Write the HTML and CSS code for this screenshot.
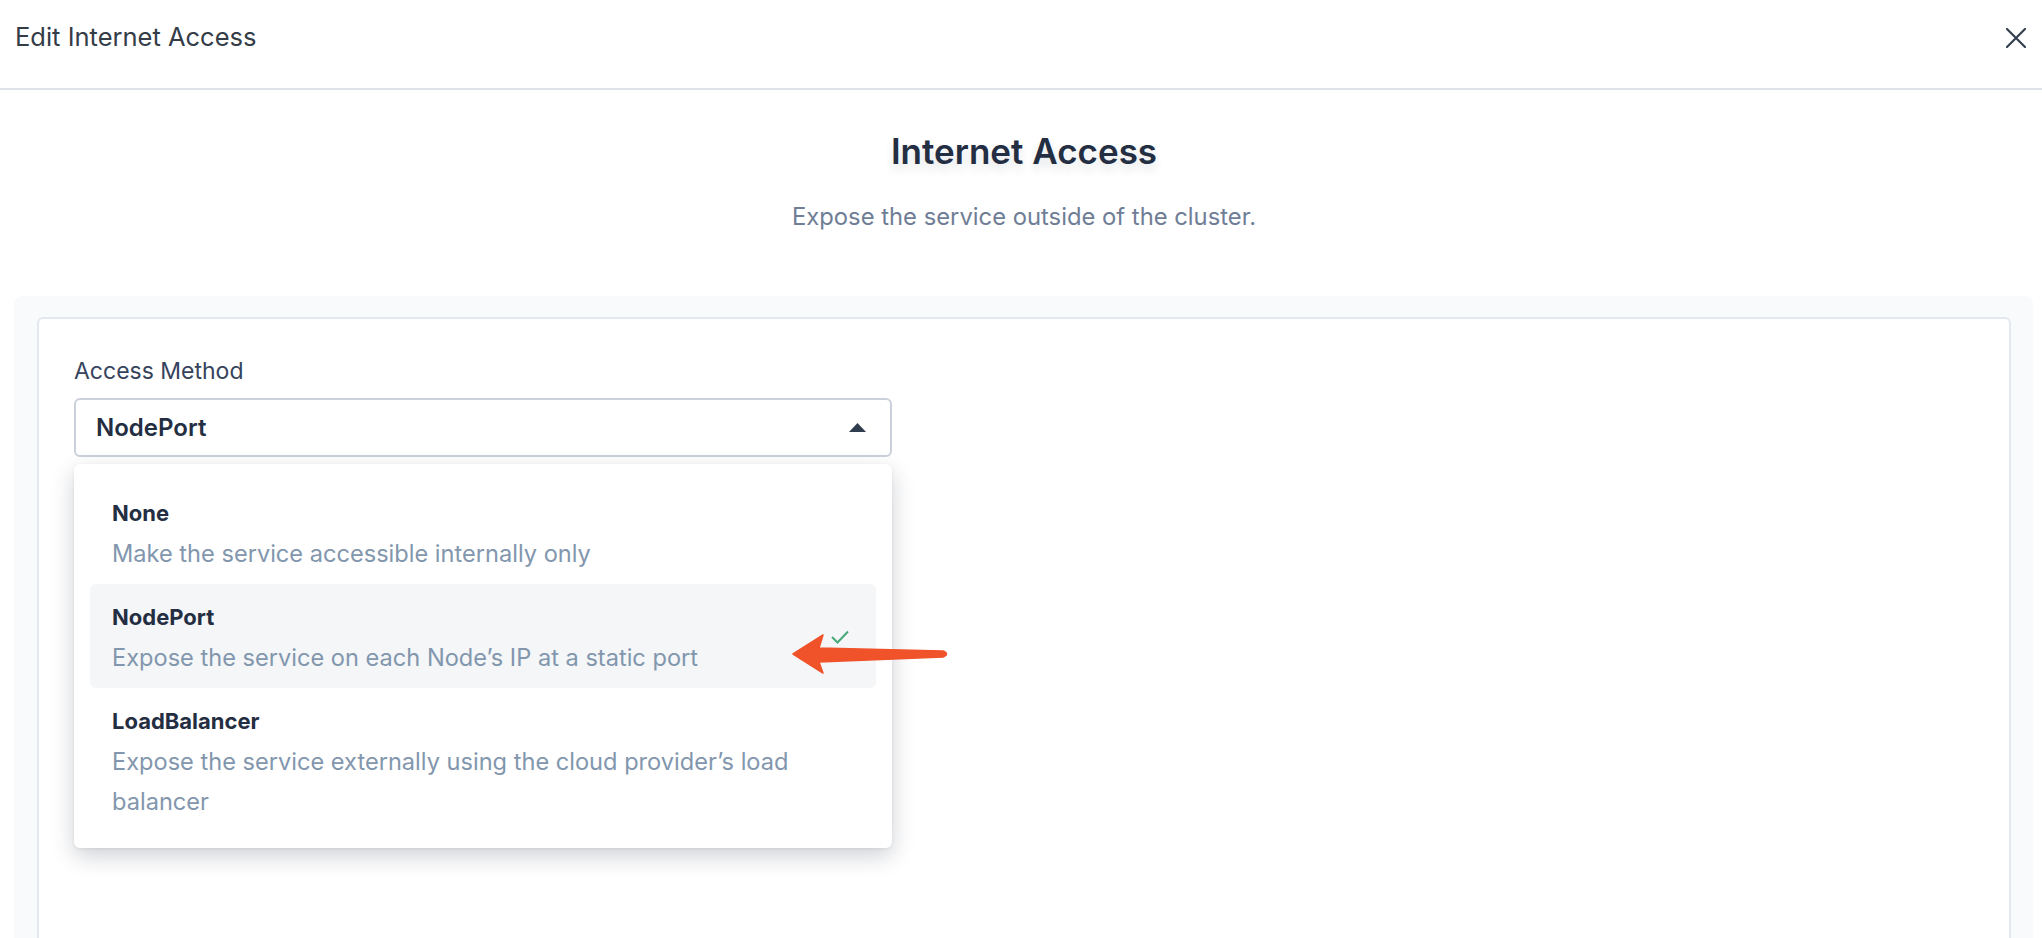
FILE: index.html
```html
<!DOCTYPE html>
<html lang="en">
<head>
<meta charset="utf-8">
<title>Edit Internet Access</title>
<link rel="stylesheet" href="styles.css">
</head>
<body>
<header class="modal-head">
  <h1 class="modal-title">Edit Internet Access</h1>
  <button class="close-btn" aria-label="Close">
    <svg width="20" height="20" viewBox="0 0 20 20"><path d="M1 1 L19 19 M19 1 L1 19" stroke="#34404f" stroke-width="2.2" stroke-linecap="round" fill="none"/></svg>
  </button>
</header>
<main class="modal-body">
  <div class="intro">
    <h2 class="intro-title">Internet Access</h2>
    <p class="intro-sub">Expose the service outside of the cluster.</p>
  </div>
  <section class="panel">
    <div class="card">
      <div class="field-label">Access Method</div>
      <div class="select-wrap">
        <div class="select">
          <span class="select-value">NodePort</span>
          <svg class="caret" width="17" height="9" viewBox="0 0 17 9"><path d="M0 9 L8.5 0 L17 9 Z" fill="#2f3d4f"/></svg>
        </div>
        <ul class="menu">
          <li class="option">
            <div class="option-text">
              <div class="option-title">None</div>
              <div class="option-desc">Make the service accessible internally only</div>
            </div>
          </li>
          <li class="option selected">
            <div class="option-text">
              <div class="option-title">NodePort</div>
              <div class="option-desc">Expose the service on each Node’s IP at a static port</div>
            </div>
            <svg class="check" width="18" height="14" viewBox="0 0 18 14"><path d="M1 7 L6.5 12.5 L17 1.5" stroke="#48a978" stroke-width="2" fill="none"/></svg>
          </li>
          <li class="option">
            <div class="option-text">
              <div class="option-title">LoadBalancer</div>
              <div class="option-desc">Expose the service externally using the cloud provider’s load balancer</div>
            </div>
          </li>
        </ul>
      </div>
    </div>
  </section>
</main>
<svg class="annot-arrow" width="162" height="45" viewBox="0 0 162 45">
  <path d="M3 22 L33 3 L29 16 L153 19 Q160 22 153 25 L29 30 L33 41 Z" fill="#f0522a" stroke="#f0522a" stroke-width="1.5" stroke-linejoin="round"/>
</svg>
</body>
</html>
```
FILE: styles.css
```css
* { box-sizing: border-box; }
html, body { margin: 0; padding: 0; }
body {
  font-family: "Inter", "Liberation Sans", sans-serif;
  background: #ffffff;
  color: #242e42;
  overflow: hidden;
  height: 938px;
  position: relative;
}
.modal-head {
  height: 90px;
  border-bottom: 2px solid #dfe3e8;
  display: flex;
  justify-content: space-between;
  align-items: flex-start;
  padding: 21px 16px 0 15px;
}
.modal-title {
  margin: 0;
  font-size: 25.5px;
  line-height: 32px;
  font-weight: 400;
  color: #343c48;
}
.close-btn {
  border: 0;
  background: transparent;
  padding: 0;
  margin-top: 7px;
  width: 20px;
  height: 20px;
  display: flex;
}
.intro {
  text-align: center;
  padding: 37px 0 0 6px;
}
.intro-title {
  margin: 0;
  font-size: 35px;
  line-height: 48px;
  font-weight: 600;
  color: #242e42;
  text-shadow: 0 6px 10px rgba(36, 46, 66, 0.12);
}
.intro-sub {
  margin: 26px 0 0;
  font-size: 23.8px;
  line-height: 32px;
  color: #6f7e96;
}
.panel {
  margin: 63px 9px 0 14px;
  background: #f9fafb;
  border-radius: 8px;
  padding: 21px 22px 0 23px;
}
.card {
  background: #fff;
  border: 2px solid #e3e8ee;
  border-radius: 6px;
  min-height: 700px;
  padding: 36px 35px 0;
}
.field-label {
  font-size: 23px;
  line-height: 32px;
  color: #36435c;
}
.select-wrap {
  position: relative;
  width: 818px;
  margin-top: 11px;
}
.select {
  height: 59px;
  border: 2px solid #cbd1da;
  border-radius: 6px;
  display: flex;
  align-items: center;
  justify-content: space-between;
  padding: 0 24px 0 20px;
}
.select-value {
  font-size: 24px;
  font-weight: 600;
  color: #242e42;
}
.menu {
  position: absolute;
  top: 66px;
  left: 0;
  width: 818px;
  margin: 0;
  list-style: none;
  padding: 16px;
  background: #fff;
  border-radius: 6px;
  box-shadow: 0 8px 22px rgba(36, 46, 66, 0.22), 0 1px 3px rgba(36, 46, 66, 0.08);
}
.option {
  display: flex;
  align-items: center;
  padding: 12px 27px 10px 22px;
  border-radius: 6px;
}
.option.selected { background: #f4f6f8; }
.option-text { flex: 1; }
.option-title {
  font-size: 22px;
  line-height: 42px;
  font-weight: 700;
  color: #242e42;
}
.option-desc {
  font-size: 23.6px;
  line-height: 40px;
  color: #8296ad;
}
.check { flex: none; margin-top: 0; }
.annot-arrow {
  position: absolute;
  left: 790px;
  top: 632px;
}
```
